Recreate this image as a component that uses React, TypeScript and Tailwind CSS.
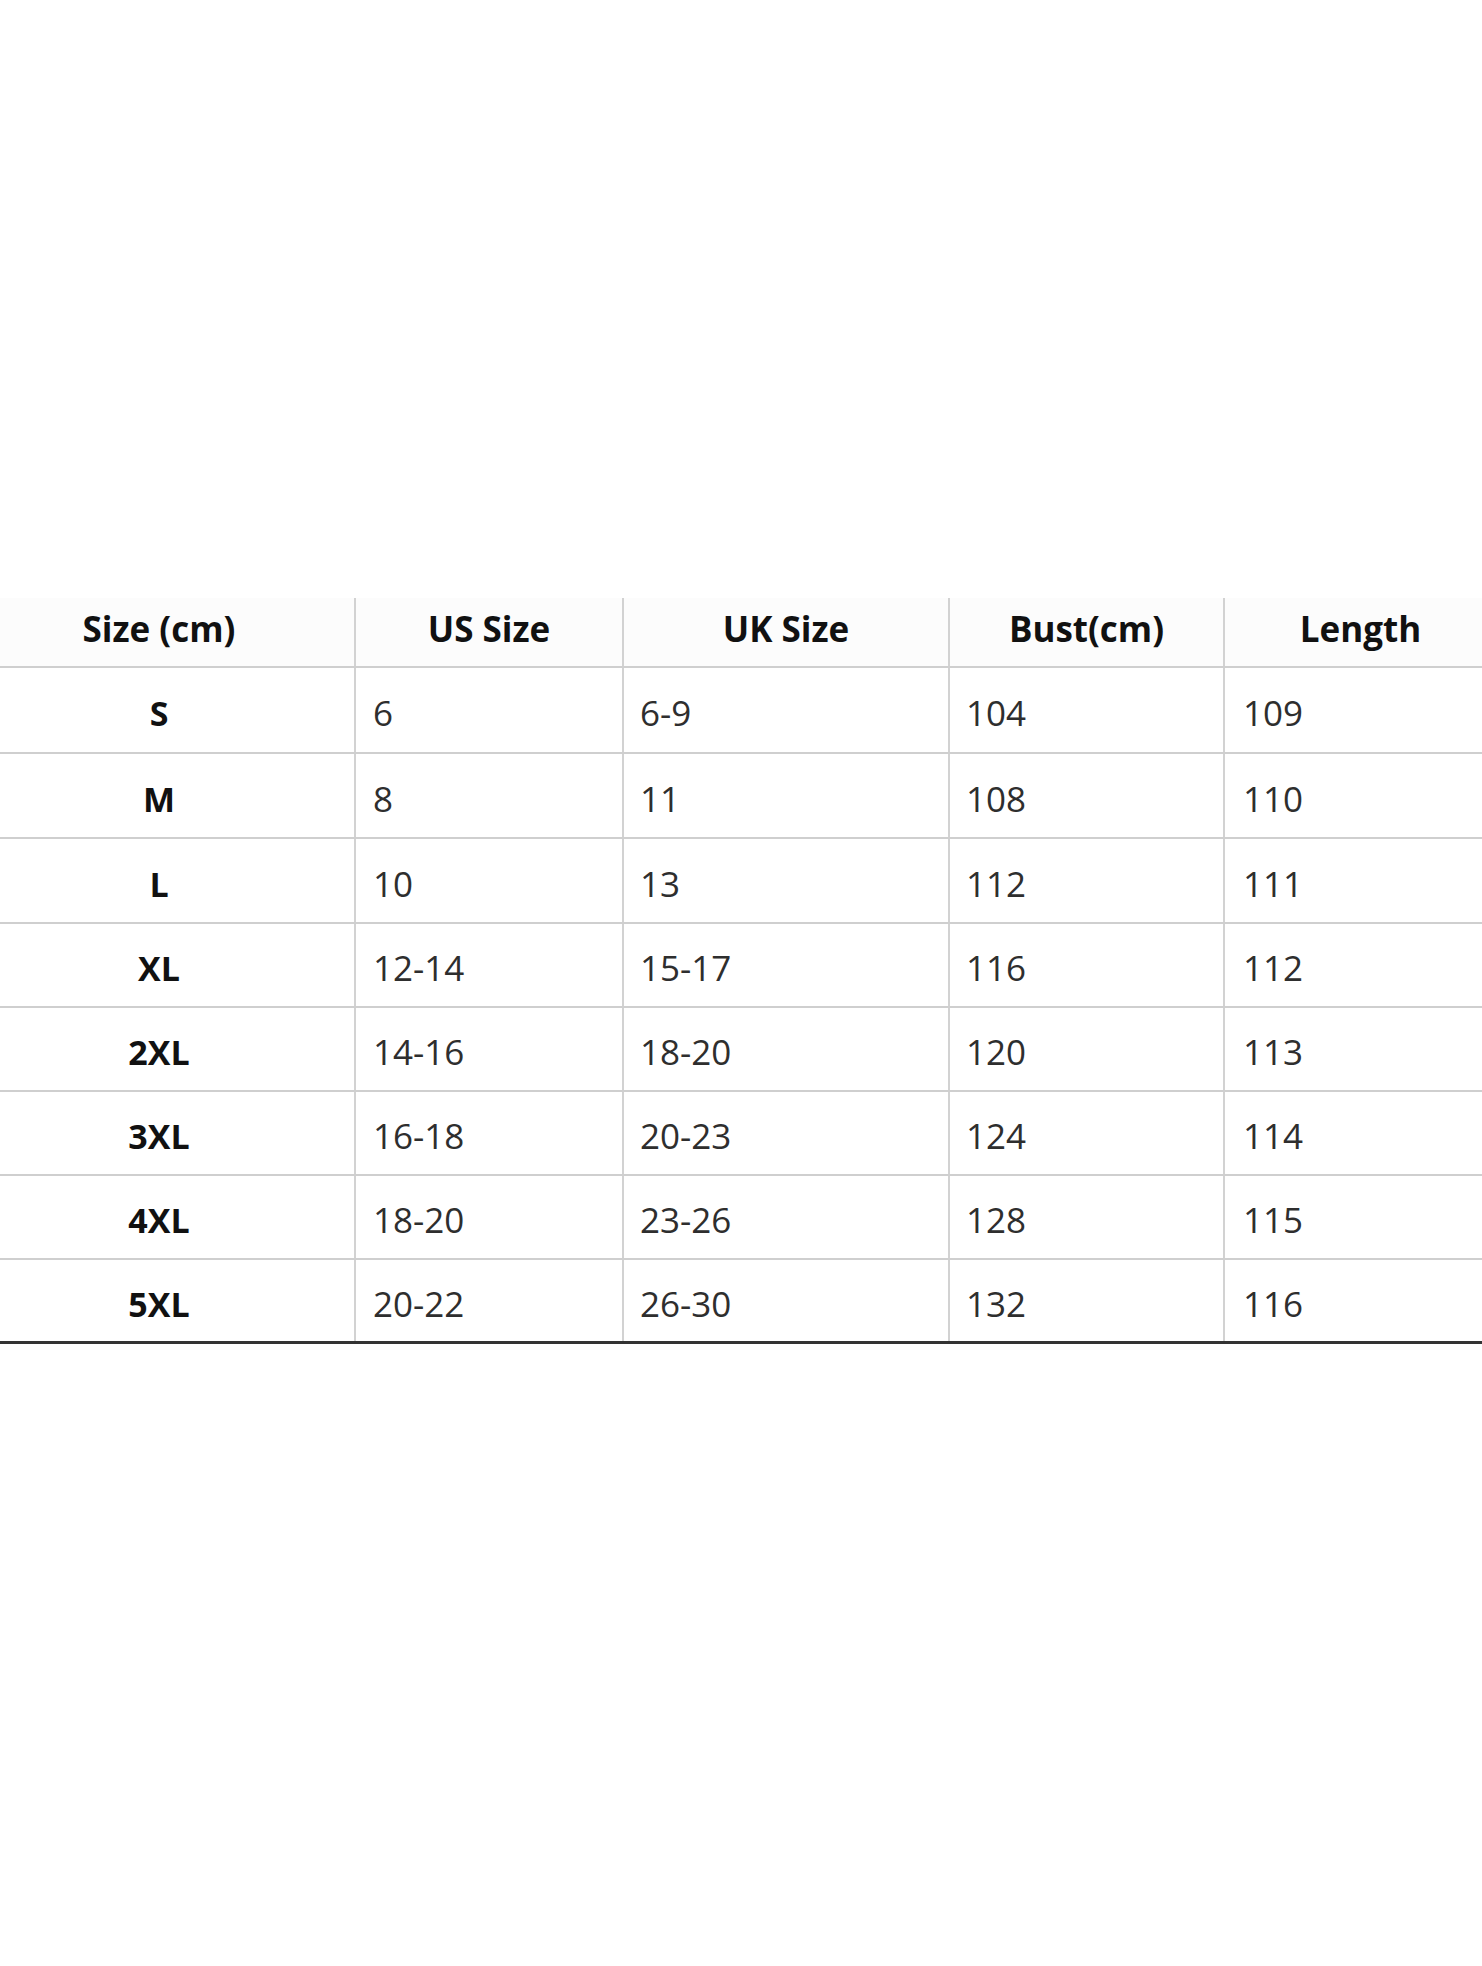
import React from "react"

const rows = [
  { size: "S", us: "6", uk: "6-9", bust: "104", length: "109" },
  { size: "M", us: "8", uk: "11", bust: "108", length: "110" },
  { size: "L", us: "10", uk: "13", bust: "112", length: "111" },
  { size: "XL", us: "12-14", uk: "15-17", bust: "116", length: "112" },
  { size: "2XL", us: "14-16", uk: "18-20", bust: "120", length: "113" },
  { size: "3XL", us: "16-18", uk: "20-23", bust: "124", length: "114" },
  { size: "4XL", us: "18-20", uk: "23-26", bust: "128", length: "115" },
  { size: "5XL", us: "20-22", uk: "26-30", bust: "132", length: "116" },
]

const heights = ["h-[86px]", "h-[85px]", "h-[85px]", "h-[84px]", "h-[84px]", "h-[84px]", "h-[84px]", "h-[84px]"]

const cols = "grid grid-cols-[356px_268px_326px_275px_1fr]"

export default function App() {
  return (
    <div className="min-h-[1966px] bg-white pt-[598px] font-['Open_Sans','Liberation_Sans',sans-serif]">
      {/* Header */}
      <div className={`${cols} h-[70px] border-b-2 border-[#cfcfcf] bg-[#fcfcfc] text-[35px] font-bold text-[#111]`}>
        <div className="flex items-center justify-center border-r-2 border-[#d2d2d2] pr-[36px] pb-[6px]">Size (cm)</div>
        <div className="flex items-center justify-center border-r-2 border-[#d2d2d2] pb-[6px]">US Size</div>
        <div className="flex items-center justify-center border-r-2 border-[#d2d2d2] pb-[6px]">UK Size</div>
        <div className="flex items-center justify-center border-r-2 border-[#d2d2d2] pb-[6px]">Bust(cm)</div>
        <div className="flex items-center justify-center pl-[14px] pb-[6px]">Length</div>
      </div>

      {/* Rows */}
      {rows.map((r, i) => (
        <div
          key={r.size}
          className={`${cols} ${heights[i]} ${
            i === rows.length - 1 ? "border-b-[3px] border-[#333]" : "border-b-2 border-[#cfcfcf]"
          } text-[35px] text-[#2e2e2e]`}
        >
          <div className="flex items-center justify-center border-r-2 border-[#d2d2d2] pr-[36px] pt-[7px] text-[34px] font-bold text-[#111]">
            {r.size}
          </div>
          <div className="flex items-center border-r-2 border-[#d2d2d2] pl-[17px] pt-[7px]">{r.us}</div>
          <div className="flex items-center border-r-2 border-[#d2d2d2] pl-[16px] pt-[7px]">{r.uk}</div>
          <div className="flex items-center border-r-2 border-[#d2d2d2] pl-[16px] pt-[7px]">{r.bust}</div>
          <div className="flex items-center pl-[18px] pt-[7px]">{r.length}</div>
        </div>
      ))}
    </div>
  )
}
